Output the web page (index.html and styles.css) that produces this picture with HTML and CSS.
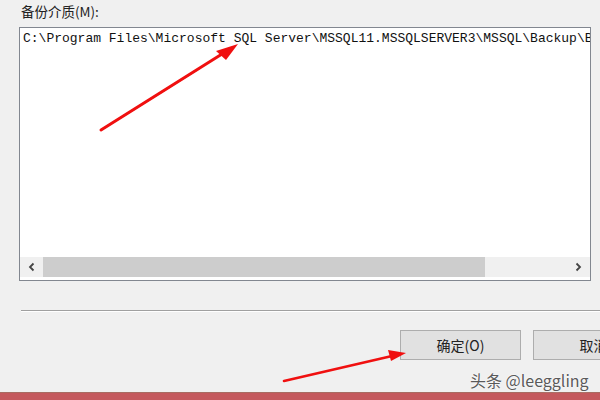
FILE: index.html
```html
<!DOCTYPE html>
<html>
<head>
<meta charset="utf-8">
<link rel="stylesheet" href="styles.css">
</head>
<body>
<div class="page">
  <div class="label">备份介质(M):</div>
  <div class="listbox">
    <div class="list-content">
      <div class="item">C:\Program Files\Microsoft SQL Server\MSSQL11.MSSQLSERVER3\MSSQL\Backup\Backup.bak</div>
    </div>
    <div class="hscroll">
      <div class="arrow-btn"><svg width="10" height="10" viewBox="0 0 10 10"><path d="M6.5 1.5 L3 5 L6.5 8.5" fill="none" stroke="#444" stroke-width="1.8"/></svg></div>
      <div class="track"><div class="thumb"></div></div>
      <div class="arrow-btn"><svg width="10" height="10" viewBox="0 0 10 10"><path d="M3.5 1.5 L7 5 L3.5 8.5" fill="none" stroke="#444" stroke-width="1.8"/></svg></div>
    </div>
  </div>
  <div class="sep"></div>
  <div class="buttons">
    <div class="btn">确定(O)</div>
    <div class="btn">取消</div>
  </div>
  <div class="bottom-bar"></div>
  <div class="watermark">头条 @leeggling</div>
  <svg class="arrows" width="600" height="400" viewBox="0 0 600 400">
    <path d="M101 130 L222 54" stroke="#f01010" stroke-width="3" stroke-linecap="round"/>
    <path d="M101 130 L200 68" stroke="#f01010" stroke-width="1.5" stroke-linecap="round"/>
    <polygon points="238,44 216,51 226,60" fill="#f01010"/>
    <path d="M284 381 L392 356" stroke="#f01010" stroke-width="2.6" stroke-linecap="round"/>
    <polygon points="406,353 388,350 391,361" fill="#f01010"/>
  </svg>
</div>
</body>
</html>
```
FILE: styles.css
```css
html, body {
  margin: 0;
  padding: 0;
  background: #f0f0f0;
}
.page {
  position: relative;
  width: 600px;
  height: 400px;
  overflow: hidden;
  display: flex;
  flex-direction: column;
}
.label {
  height: 27px;
  box-sizing: border-box;
  padding: 3px 0 0 21px;
  font-family: "Noto Sans CJK SC", "Liberation Sans", sans-serif;
  font-size: 13.5px;
  line-height: 17px;
  color: #222;
}
.listbox {
  margin-left: 19px;
  width: 572px;
  height: 254px;
  box-sizing: border-box;
  border: 1px solid #828790;
  background: #fff;
  display: flex;
  flex-direction: column;
}
.list-content {
  flex: 1;
  overflow: hidden;
  padding: 3px 0 0 3px;
}
.item {
  white-space: nowrap;
  font-family: "Liberation Mono", monospace;
  font-size: 13px;
  line-height: 15px;
  color: #111;
}
.hscroll {
  height: 20px;
  margin-bottom: 3px;
  display: flex;
  background: #f0f0f0;
}
.arrow-btn {
  width: 23px;
  display: flex;
  align-items: center;
  justify-content: center;
}
.hscroll .arrow-btn:last-child {
  width: 24px;
}
.track {
  flex: 1;
  display: flex;
}
.thumb {
  width: 442px;
  background: #cdcdcd;
}
.sep {
  margin: 29px 0 0 21px;
  height: 0;
  border-top: 1px solid #a0a0a0;
  border-bottom: 1px solid #fff;
}
.buttons {
  margin: 18px 0 0 400px;
  display: flex;
  gap: 12px;
}
.btn {
  flex: none;
  width: 121px;
  height: 30px;
  box-sizing: border-box;
  border: 1px solid #adadad;
  background: #e1e1e1;
  display: flex;
  align-items: center;
  justify-content: center;
  font-family: "Noto Sans CJK SC", "Liberation Sans", sans-serif;
  font-size: 14px;
  color: #222;
}
.bottom-bar {
  margin-top: 32px;
  height: 8px;
  box-sizing: border-box;
  border-top: 1px solid #a86c62;
  background: #c4595d;
}
.watermark {
  position: absolute;
  left: 470px;
  top: 368px;
  font-family: "Noto Sans CJK SC", "Liberation Sans", sans-serif;
  font-size: 16px;
  color: #5a5a5a;
  text-shadow: 0 0 2px #fff, 0 0 1px #fff;
}
.arrows {
  position: absolute;
  left: 0;
  top: 0;
  pointer-events: none;
}
```
